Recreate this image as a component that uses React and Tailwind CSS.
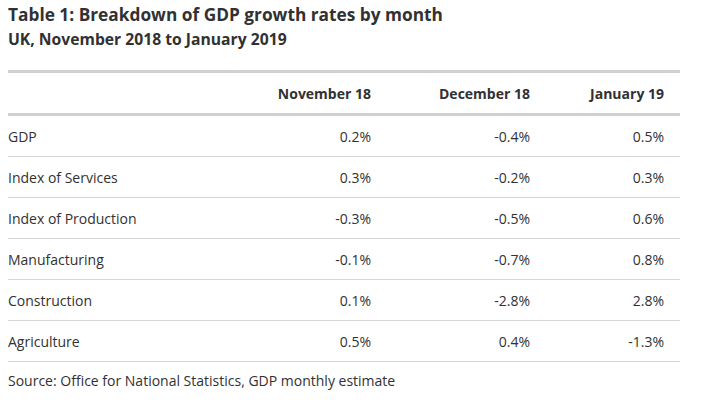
import React from "react";

const rows = [
  ["GDP", "0.2%", "-0.4%", "0.5%"],
  ["Index of Services", "0.3%", "-0.2%", "0.3%"],
  ["Index of Production", "-0.3%", "-0.5%", "0.6%"],
  ["Manufacturing", "-0.1%", "-0.7%", "0.8%"],
  ["Construction", "0.1%", "-2.8%", "2.8%"],
  ["Agriculture", "0.5%", "0.4%", "-1.3%"],
];

const cols = "grid grid-cols-[220px_159px_159px_134px]";

export default function App() {
  return (
    <div className="w-[703px] h-[403px] bg-white px-2 pt-[3px] text-[#323132] font-['Open_Sans',sans-serif]">
      <h1 className="text-[17.3px] font-bold leading-[24px]">
        Table 1: Breakdown of GDP growth rates by month
      </h1>
      <h2 className="text-[15.7px] font-bold leading-[24px]">
        UK, November 2018 to January 2019
      </h2>
      <div className="w-[672px] mt-[19px] border-t-[3px] border-[#d0d0d0]">
        <div className={`${cols} h-[43px] items-center border-b-[3px] border-[#d0d0d0] text-[14px] font-bold`}>
          <div></div>
          <div className="text-right pr-4">November 18</div>
          <div className="text-right pr-4">December 18</div>
          <div className="text-right pr-4">January 19</div>
        </div>
        {rows.map((r) => (
          <div
            key={r[0]}
            className={`${cols} h-[41px] items-center border-b border-[#d6d6d6] text-[14px]`}
          >
            <div>{r[0]}</div>
            <div className="text-right pr-4">{r[1]}</div>
            <div className="text-right pr-4">{r[2]}</div>
            <div className="text-right pr-4">{r[3]}</div>
          </div>
        ))}
      </div>
      <p className="text-[14px] mt-[8px]">
        Source: Office for National Statistics, GDP monthly estimate
      </p>
    </div>
  );
}
